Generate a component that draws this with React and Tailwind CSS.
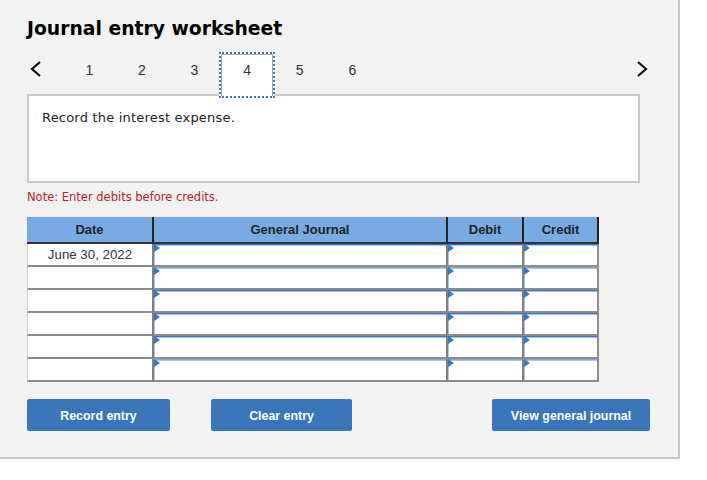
const TABS = ["1", "2", "3", "4", "5", "6"];
const ROWS = ["June 30, 2022", "", "", "", "", ""];

const Chevron = ({ d }) => (
    <svg width="14" height="18" viewBox="0 0 14 18" fill="none" stroke="#111" strokeWidth="2.2">
        <path d={d} />
    </svg>
);

const EntryCell = ({ faint, last }) => (
    <div
        className={
            "relative h-[23px] bg-white border-l-[2px] border-b-[2px] border-l-[#7f7f7f] border-b-[#8c8c8c] border-t-[1px] shadow-[inset_1px_1px_0_#a9c6ea] " +
            (faint ? "border-t-[#7fa8dc] " : "border-t-[#3a75ba] ") +
            (last ? "border-r-[2px] border-r-[#8c8c8c]" : "")
        }
    >
        <span className="absolute left-0 top-[-1px] w-0 h-0 border-y-[4px] border-y-transparent border-l-[6px] border-l-[#3a75ba]" />
    </div>
);

const ActionButton = ({ className, children }) => (
    <button
        type="button"
        className={"h-8 pt-[2px] rounded-[2px] bg-[#3a75ba] text-white text-[12.4px] font-bold font-['Liberation_Sans',sans-serif] " + className}
    >
        {children}
    </button>
);

export default function App() {
    return (
        <div className="w-[707px] h-[480px] bg-white overflow-hidden">
            <div className="w-[680px] h-[459px] bg-[#f2f2f2] border-r-2 border-b-2 border-[#c8c8c8] pl-[27px] pt-[15px] flex flex-col font-['DejaVu_Sans',sans-serif]">
                <h1 className="text-[18.75px] leading-[28px] font-bold text-black">Journal entry worksheet</h1>

                <div className="relative z-10 flex items-start h-[45px] mt-[9px] w-[625px]">
                    <div className="w-[36px] h-[33px] flex items-center pl-[2px]">
                        <Chevron d="M11 2 L3 9 L11 16" />
                    </div>
                    {TABS.map((tab) => (
                        tab === "4" ? (
                            <div key={tab} className="w-[56px] mx-[-1.7px] h-[46px] bg-white border-2 border-dotted border-[#3a75ba]">
                                <div className="h-full bg-white border-x border-t border-[#a8a8a8] pt-[7px] text-center text-[14px] leading-[16px] text-[#333] font-['Liberation_Sans',sans-serif]">
                                    {tab}
                                </div>
                            </div>
                        ) : (
                            <div key={tab} className="w-[52.6px] h-[45px] pt-[10px] text-center text-[14px] leading-[16px] text-[#333] font-['Liberation_Sans',sans-serif]">
                                {tab}
                            </div>
                        )
                    ))}
                    <div className="ml-auto mr-[3px] h-[33px] flex items-center">
                        <Chevron d="M3 2 L11 9 L3 16" />
                    </div>
                </div>

                <div className="w-[613px] h-[89px] mt-[-3px] bg-white border-2 border-[#c8c8c8] pl-[13px] pt-[13px] text-[13px] leading-[18px] tracking-[0.2px] text-[#222]">
                    Record the interest expense.
                </div>

                <p className="mt-[7px] text-[11.5px] leading-[15px] text-[#b3262c]">
                    Note: Enter debits before credits.
                </p>

                <div className="mt-[12px] w-[572px] font-['Liberation_Sans',sans-serif]">
                    <div className="grid grid-cols-[125px_294px_76px_77px] h-[27px] bg-[#78abe4] border-b-[2px] border-[#333] text-[13px] text-[#222] font-bold text-center leading-[25px]">
                        <div>Date</div>
                        <div className="border-l-2 border-[#222]">General Journal</div>
                        <div className="border-l-2 border-[#222]">Debit</div>
                        <div className="border-x-2 border-[#222]">Credit</div>
                    </div>
                    {ROWS.map((date, i) => (
                        <div key={i} className="grid grid-cols-[125px_294px_76px_77px]">
                            <div className="h-[23px] bg-white border-l-[1px] border-l-[#d0d0d0] border-b-[2px] border-b-[#8c8c8c] text-center text-[13.3px] leading-[21px] text-[#333]">
                                {date}
                            </div>
                            <EntryCell faint={i === 1 || i === 5} />
                            <EntryCell faint={i === 1 || i === 5} />
                            <EntryCell faint={i === 1 || i === 5} last />
                        </div>
                    ))}
                </div>

                <div className="mt-[17px] flex w-[623px]">
                    <ActionButton className="w-[143px]">Record entry</ActionButton>
                    <ActionButton className="w-[141px] ml-[41px]">Clear entry</ActionButton>
                    <ActionButton className="w-[158px] ml-auto">View general journal</ActionButton>
                </div>
            </div>
        </div>
    );
}
